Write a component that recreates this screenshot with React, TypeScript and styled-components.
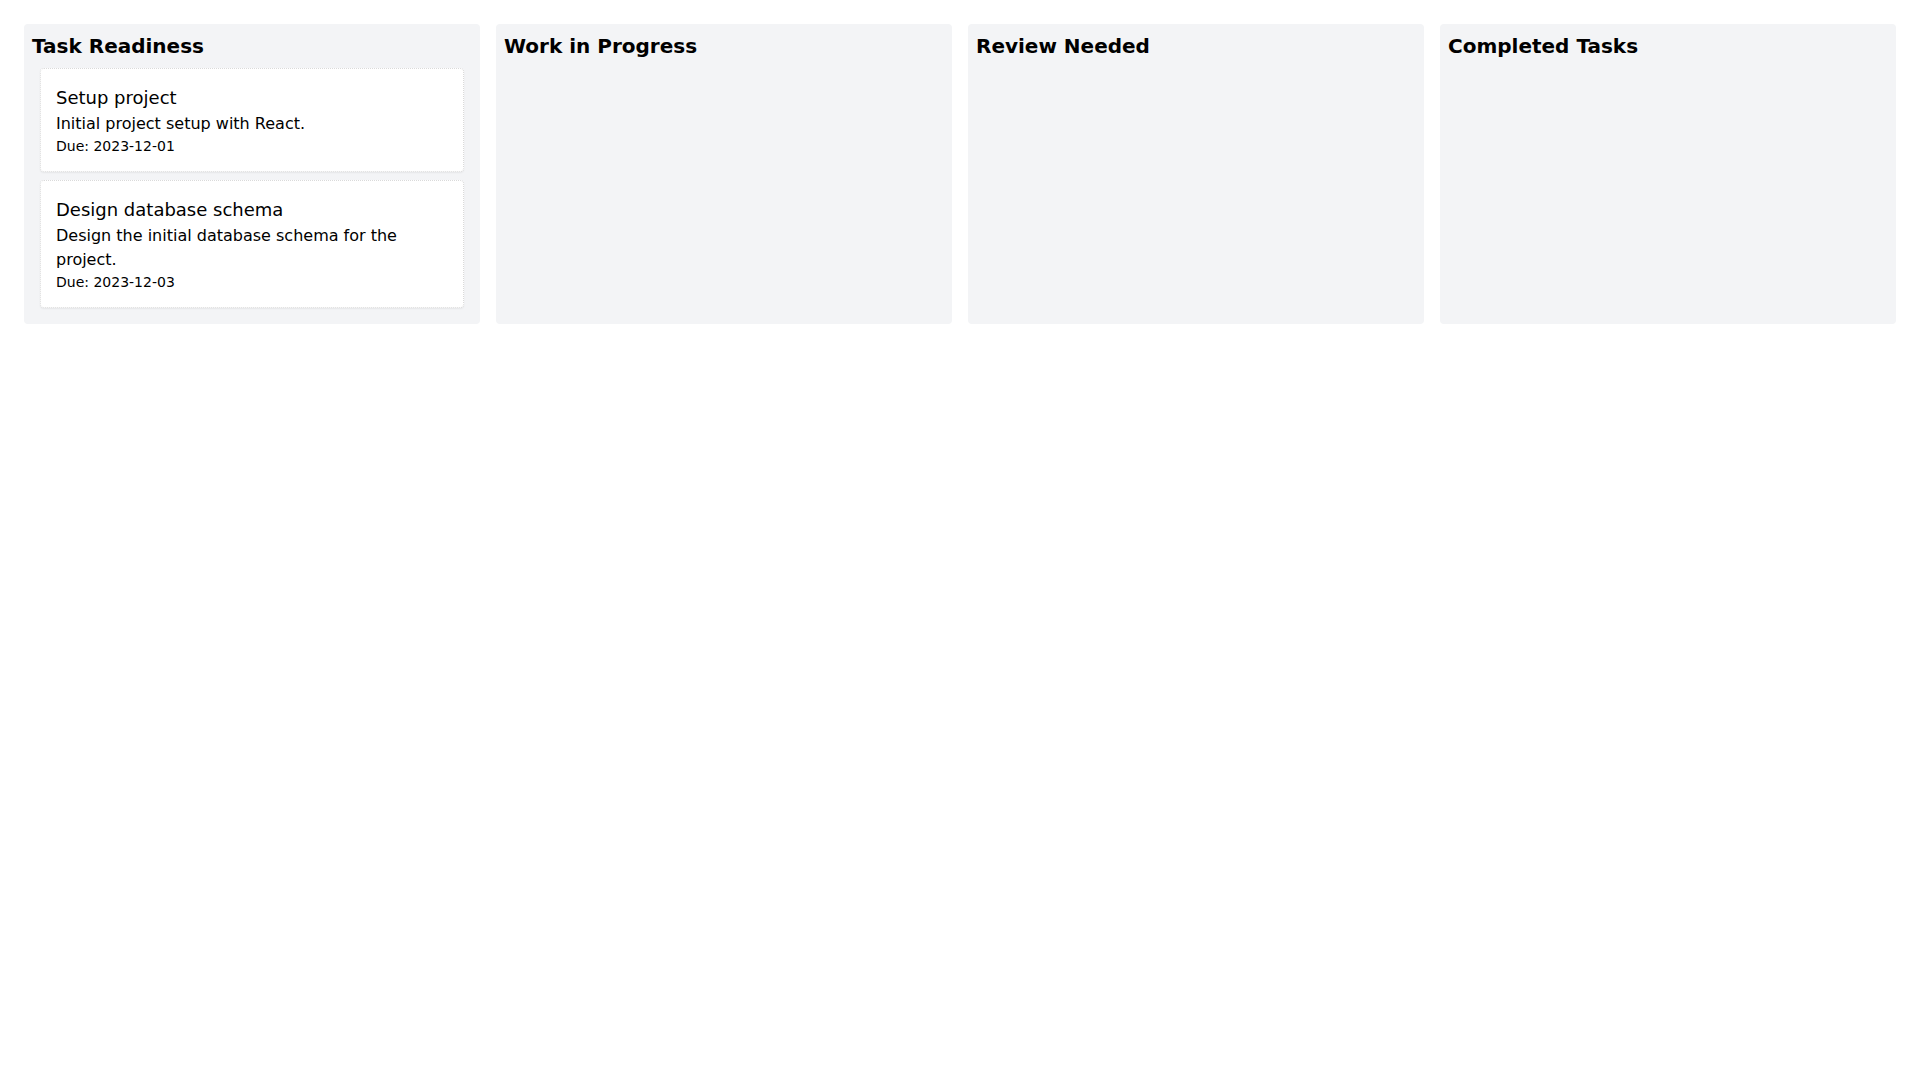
import React from "react";
import styled, { createGlobalStyle } from "styled-components";

const GlobalStyle = createGlobalStyle`
  html, body {
    margin: 0;
    padding: 0;
    background: #ffffff;
  }
  body {
    font-family: "DejaVu Sans", sans-serif;
    color: #000000;
  }
  * { box-sizing: border-box; }
`;

const Board = styled.div`
  display: grid;
  grid-template-columns: repeat(4, 1fr);
  gap: 16px;
  padding: 24px;
  align-items: start;
`;

const Column = styled.section`
  background: #f3f4f6;
  border-radius: 4px;
  padding: 8px;
  height: 300px;
`;

const ColumnTitle = styled.h2`
  margin: 0;
  font-size: 20px;
  line-height: 28px;
  font-weight: 700;
`;

const CardList = styled.div`
  display: flex;
  flex-direction: column;
  gap: 8px;
  padding: 8px;
`;

const Card = styled.div`
  background: #ffffff;
  border-radius: 4px;
  padding: 15px;
  border: 1px dotted #dadada;
  box-shadow: 0 1px 2px rgba(0, 0, 0, 0.06);
`;

const CardTitle = styled.h3`
  margin: 0;
  font-size: 18px;
  line-height: 28px;
  font-weight: 400;
`;

const CardText = styled.p`
  margin: 0;
  font-size: 16px;
  line-height: 24px;
`;

const CardDue = styled.p`
  margin: 0;
  font-size: 14px;
  line-height: 20px;
`;

type Task = { id: string; title: string; description: string; due: string };
type Col = { id: string; title: string; tasks: Task[] };

const columns: Col[] = [
  {
    id: "ready",
    title: "Task Readiness",
    tasks: [
      { id: "1", title: "Setup project", description: "Initial project setup with React.", due: "2023-12-01" },
      {
        id: "2",
        title: "Design database schema",
        description: "Design the initial database schema for the project.",
        due: "2023-12-03",
      },
    ],
  },
  { id: "wip", title: "Work in Progress", tasks: [] },
  { id: "review", title: "Review Needed", tasks: [] },
  { id: "done", title: "Completed Tasks", tasks: [] },
];

export default function App() {
  return (
    <>
      <GlobalStyle />
      <Board>
        {columns.map((col) => (
          <Column key={col.id}>
            <ColumnTitle>{col.title}</ColumnTitle>
            <CardList>
              {col.tasks.map((t) => (
                <Card key={t.id}>
                  <CardTitle>{t.title}</CardTitle>
                  <CardText>{t.description}</CardText>
                  <CardDue>Due: {t.due}</CardDue>
                </Card>
              ))}
            </CardList>
          </Column>
        ))}
      </Board>
    </>
  );
}
